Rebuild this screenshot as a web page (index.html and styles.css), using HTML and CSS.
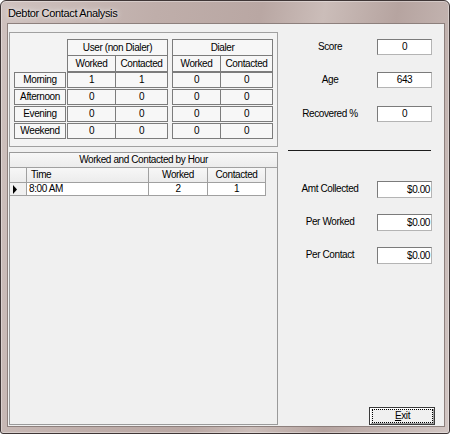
FILE: index.html
```html
<!DOCTYPE html>
<html>
<head>
<meta charset="utf-8">
<title>Debtor Contact Analysis</title>
<link rel="stylesheet" href="styles.css">
</head>
<body>
<div class="window">
  <div class="titlebar"><span class="title">Debtor Contact Analysis</span></div>
  <div class="client">
    <div class="leftcol">
      <div class="summary">
        <div class="mrow head">
          <div class="corner"></div>
          <div class="grp hgrp">
            <div class="gtitle">User (non Dialer)</div>
            <div class="gsub"><span class="c1">Worked</span><span class="c2">Contacted</span></div>
          </div>
          <div class="grp hgrp">
            <div class="gtitle">Dialer</div>
            <div class="gsub"><span class="c1">Worked</span><span class="c2">Contacted</span></div>
          </div>
        </div>
        <div class="mrow"><div class="lab">Morning</div><div class="grp"><span class="c1">1</span><span class="c2">1</span></div><div class="grp"><span class="c1">0</span><span class="c2">0</span></div></div>
        <div class="mrow"><div class="lab">Afternoon</div><div class="grp"><span class="c1">0</span><span class="c2">0</span></div><div class="grp"><span class="c1">0</span><span class="c2">0</span></div></div>
        <div class="mrow"><div class="lab">Evening</div><div class="grp"><span class="c1">0</span><span class="c2">0</span></div><div class="grp"><span class="c1">0</span><span class="c2">0</span></div></div>
        <div class="mrow"><div class="lab">Weekend</div><div class="grp"><span class="c1">0</span><span class="c2">0</span></div><div class="grp"><span class="c1">0</span><span class="c2">0</span></div></div>
      </div>
      <div class="dgrid">
        <div class="dg-title">Worked and Contacted by Hour</div>
        <div class="dg-row dg-head">
          <div class="rh"></div>
          <div class="c-time">Time</div>
          <div class="c-w">Worked</div>
          <div class="c-c">Contacted</div>
        </div>
        <div class="dg-row dg-data">
          <div class="rh"><svg class="arrow" width="6" height="9" viewBox="0 0 6 9"><polygon points="1,0 5,4.5 1,9" fill="#000"/></svg></div>
          <div class="c-time">8:00 AM</div>
          <div class="c-w">2</div>
          <div class="c-c">1</div>
        </div>
      </div>
    </div>
    <div class="rightcol">
      <div class="field f1"><span class="flabel">Score</span><span class="fbox">0</span></div>
      <div class="field f2"><span class="flabel">Age</span><span class="fbox">643</span></div>
      <div class="field f3"><span class="flabel">Recovered %</span><span class="fbox">0</span></div>
      <div class="rule"></div>
      <div class="field money f4"><span class="flabel">Amt Collected</span><span class="fbox">$0.00</span></div>
      <div class="field money f5"><span class="flabel">Per Worked</span><span class="fbox">$0.00</span></div>
      <div class="field money f6"><span class="flabel">Per Contact</span><span class="fbox">$0.00</span></div>
      <button class="exit" type="button"><span class="focus"><u>E</u>xit</span></button>
    </div>
  </div>
</div>
</body>
</html>
```

FILE: styles.css
```css
* { box-sizing: border-box; }
html, body { margin: 0; padding: 0; }
body {
  width: 450px;
  height: 434px;
  overflow: hidden;
  background: #ffffff;
  font-family: "Liberation Sans", Arial, sans-serif;
  font-size: 10px;
  letter-spacing: -0.4px;
  color: #000;
}

.window {
  width: 450px;
  height: 434px;
  border: 1px solid #3f3636;
  border-radius: 6px 6px 3px 3px;
  background: linear-gradient(100deg, #cfc2bf 0%, #bfaeaa 30%, #b9a7a3 50%, #cbbdb9 62%, #b6a4a0 76%, #d2c6c3 100%);
  box-shadow: inset 0 0 0 1px rgba(255, 255, 255, 0.35);
  padding: 0 4px 6px 6px;
  display: flex;
  flex-direction: column;
}

.titlebar {
  height: 22px;
  flex: none;
  padding-left: 1px;
  padding-top: 1px;
  line-height: 22px;
}
.title {
  font-size: 11px;
  letter-spacing: -0.35px;
  color: #000;
  text-shadow: 0 0 6px rgba(255, 255, 255, 0.9), 0 0 3px rgba(255, 255, 255, 0.7);
}

.client {
  flex: 1;
  border: 1px solid #8d807d;
  background: #f0f0f0;
  display: flex;
}

/* left column */
.leftcol {
  width: 270px;
  flex: none;
  display: flex;
  flex-direction: column;
}

.summary {
  margin: 8px 0 0 1px;
  width: 269px;
  height: 115px;
  flex: none;
  border: 1px solid #a0a0a0;
  background: #f3f3f3;
  padding: 6px 0 0 4px;
}

.mrow {
  display: flex;
  height: 16px;
  margin-bottom: 1px;
}
.mrow.head {
  height: 33px;
  margin-bottom: 0;
}
.corner {
  width: 52px;
  margin-right: 1px;
}
.lab {
  width: 52px;
  margin-right: 1px;
  border: 1px solid #7c7c7c;
  background: #f7f7f7;
  text-align: center;
  line-height: 14px;
}
.grp {
  width: 101px;
  margin-right: 4px;
  border: 1px solid #7c7c7c;
  background: #f7f7f7;
  display: flex;
  line-height: 14px;
}
.grp.hgrp {
  flex-direction: column;
}
.gtitle {
  height: 16px;
  border-bottom: 1px solid #7c7c7c;
  text-align: center;
  line-height: 15px;
}
.gsub {
  flex: 1;
  display: flex;
  line-height: 15px;
}
.c1 {
  width: 48px;
  border-right: 1px solid #7c7c7c;
  text-align: center;
}
.c2 {
  flex: 1;
  text-align: center;
}

/* data grid */
.dgrid {
  margin: 5px 0 1px 1px;
  width: 269px;
  flex: 1;
  border: 1px solid #9a9a9a;
  background: #f0f0f0;
}
.dg-title {
  height: 15px;
  border-bottom: 1px solid #a0a0a0;
  text-align: center;
  line-height: 14px;
  background: linear-gradient(#f7f7f7, #ececec);
}
.dg-row {
  display: flex;
}
.dg-row > div {
  border-right: 1px solid #a0a0a0;
  border-bottom: 1px solid #a0a0a0;
}
.dg-head {
  height: 15px;
  line-height: 14px;
}
.dg-head > div {
  background: linear-gradient(#f7f7f7, #ececec);
}
.dg-data {
  height: 13px;
  line-height: 12px;
}
.dg-data > div {
  background: #ffffff;
}
.dg-data > .rh {
  background: #f0f0f0;
}
.rh {
  width: 17px;
  display: flex;
  align-items: center;
  padding-left: 2px;
}
.arrow { display: block; }
.c-time {
  width: 122px;
  padding-left: 4px;
}
.dg-data .c-time { padding-left: 2px; }
.c-w {
  width: 59px;
  text-align: center;
}
.c-c {
  width: 58px;
  text-align: center;
}

/* right column */
.rightcol {
  flex: 1;
  display: flex;
  flex-direction: column;
  padding-left: 5px;
}
.field {
  display: flex;
  height: 16px;
  flex: none;
}
.field.money { height: 17px; }
.flabel {
  width: 94px;
  text-align: center;
  line-height: 16px;
}
.fbox {
  width: 55px;
  background: #ffffff;
  border: 1px solid;
  border-color: #7b7b7b #b4b4b4 #b4b4b4 #7b7b7b;
  text-align: center;
  line-height: 14px;
}
.money .fbox {
  text-align: right;
  padding-right: 1px;
  line-height: 15px;
}
.f1 { margin-top: 15px; }
.f2 { margin-top: 17px; }
.f3 { margin-top: 18px; }
.rule {
  margin: 28px 0 0 5px;
  width: 143px;
  height: 1px;
  flex: none;
  background: #1c1c1c;
}
.f4 { margin-top: 30px; }
.f5 { margin-top: 16px; }
.f6 { margin-top: 16px; }

.exit {
  margin: auto 9px 1px 0;
  align-self: flex-end;
  width: 66px;
  height: 18px;
  padding: 1px 1px 1px 2px;
  border: 1px solid #3a3a3a;
  background: #f0f0f0;
  box-shadow: inset 1px 1px 0 #ffffff, inset -1px -1px 0 #a0a0a0;
  font-family: "Liberation Sans", Arial, sans-serif;
  font-size: 10px;
  letter-spacing: -0.4px;
  color: #000;
  display: flex;
}
.exit .focus {
  flex: 1;
  border: 1px dotted #000;
  line-height: 12px;
  text-align: center;
}
.exit u { text-decoration: underline; }
```
